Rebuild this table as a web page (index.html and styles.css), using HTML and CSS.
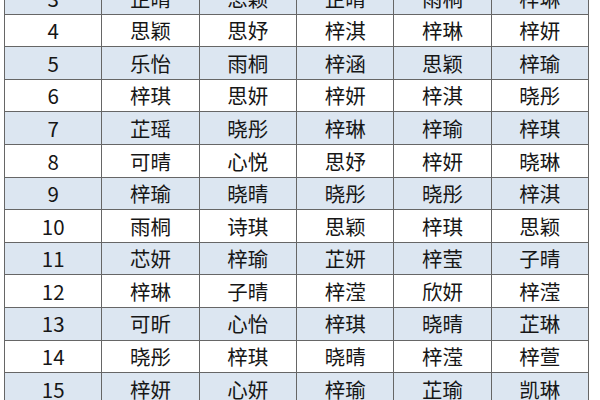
FILE: index.html
```html
<!DOCTYPE html>
<html lang="zh">
<head>
<meta charset="utf-8">
<link rel="stylesheet" href="styles.css">
</head>
<body>
<div class="frame">
<table class="names">
<colgroup><col><col><col><col><col><col></colgroup>
<tbody>
<tr class="odd"><td>3</td><td>芷晴</td><td>思颖</td><td>芷晴</td><td>雨桐</td><td>梓琳</td></tr>
<tr><td>4</td><td>思颖</td><td>思妤</td><td>梓淇</td><td>梓琳</td><td>梓妍</td></tr>
<tr class="odd"><td>5</td><td>乐怡</td><td>雨桐</td><td>梓涵</td><td>思颖</td><td>梓瑜</td></tr>
<tr><td>6</td><td>梓琪</td><td>思妍</td><td>梓妍</td><td>梓淇</td><td>晓彤</td></tr>
<tr class="odd"><td>7</td><td>芷瑶</td><td>晓彤</td><td>梓琳</td><td>梓瑜</td><td>梓琪</td></tr>
<tr><td>8</td><td>可晴</td><td>心悦</td><td>思妤</td><td>梓妍</td><td>晓琳</td></tr>
<tr class="odd"><td>9</td><td>梓瑜</td><td>晓晴</td><td>晓彤</td><td>晓彤</td><td>梓淇</td></tr>
<tr><td>10</td><td>雨桐</td><td>诗琪</td><td>思颖</td><td>梓琪</td><td>思颖</td></tr>
<tr class="odd"><td>11</td><td>芯妍</td><td>梓瑜</td><td>芷妍</td><td>梓莹</td><td>子晴</td></tr>
<tr><td>12</td><td>梓琳</td><td>子晴</td><td>梓滢</td><td>欣妍</td><td>梓滢</td></tr>
<tr class="odd"><td>13</td><td>可昕</td><td>心怡</td><td>梓琪</td><td>晓晴</td><td>芷琳</td></tr>
<tr><td>14</td><td>晓彤</td><td>梓琪</td><td>晓晴</td><td>梓滢</td><td>梓萱</td></tr>
<tr class="odd"><td>15</td><td>梓妍</td><td>心妍</td><td>梓瑜</td><td>芷瑜</td><td>凯琳</td></tr>
</tbody>
</table>
</div>
</body>
</html>
```
FILE: styles.css
```css
html, body {
  margin: 0;
  padding: 0;
  background: #ffffff;
}
.frame {
  width: 600px;
  height: 400px;
  overflow: hidden;
  padding-left: 4px;
  box-sizing: border-box;
}
.names {
  margin-top: -19px;
  width: 585px;
  table-layout: fixed;
  border-collapse: collapse;
  font-family: "Noto Sans CJK SC", "Noto Sans", sans-serif;
  font-size: 20.5px;
  color: #161616;
}
.names td {
  height: 31.6px;
  padding: 0;
  border: 1px solid #666666;
  text-align: center;
  vertical-align: middle;
  line-height: 1;
}
.names tr.odd td {
  background: #dce6f1;
}
```
